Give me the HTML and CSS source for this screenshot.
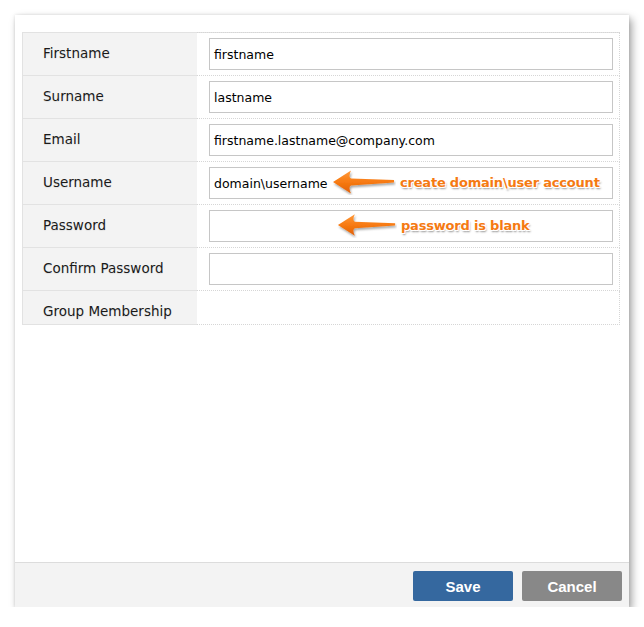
FILE: index.html
```html
<!DOCTYPE html>
<html>
<head>
<meta charset="utf-8">
<link rel="stylesheet" href="styles.css">
</head>
<body>
<svg width="0" height="0" class="defs">
  <defs>
    <linearGradient id="og" x1="0" y1="0" x2="0" y2="1">
      <stop offset="0" stop-color="#ff9a3c"/>
      <stop offset="0.5" stop-color="#f77a12"/>
      <stop offset="1" stop-color="#e0600a"/>
    </linearGradient>
    <filter id="sh" x="-20%" y="-30%" width="150%" height="180%">
      <feDropShadow dx="1" dy="2" stdDeviation="1.2" flood-color="#000" flood-opacity="0.35"/>
    </filter>
  </defs>
</svg>
<div class="dialog">
  <div class="dialog-body">
    <div class="form">
      <div class="row">
        <div class="label">Firstname</div>
        <div class="value"><div class="input">firstname</div></div>
      </div>
      <div class="row">
        <div class="label">Surname</div>
        <div class="value"><div class="input">lastname</div></div>
      </div>
      <div class="row">
        <div class="label">Email</div>
        <div class="value"><div class="input">firstname.lastname@company.com</div></div>
      </div>
      <div class="row">
        <div class="label">Username</div>
        <div class="value">
          <div class="input">domain\username</div>
          <div class="note note-user">
            <svg class="arrow" width="64" height="26" viewBox="0 0 64 26"><path d="M1 13 L19 1.5 Q16 8 19 9.5 L62 11 L62 13.5 L19 16.5 Q16 18 19 24.5 Z" fill="url(#og)" filter="url(#sh)"/></svg>
            <span class="note-text">create domain\user account</span>
          </div>
        </div>
      </div>
      <div class="row">
        <div class="label">Password</div>
        <div class="value">
          <div class="input"></div>
          <div class="note note-pass">
            <svg class="arrow" width="60" height="26" viewBox="0 0 64 26"><path d="M1 13 L19 1.5 Q16 8 19 9.5 L62 11 L62 13.5 L19 16.5 Q16 18 19 24.5 Z" fill="url(#og)" filter="url(#sh)"/></svg>
            <span class="note-text">password is blank</span>
          </div>
        </div>
      </div>
      <div class="row">
        <div class="label">Confirm Password</div>
        <div class="value"><div class="input"></div></div>
      </div>
      <div class="row last">
        <div class="label">Group Membership</div>
        <div class="value"></div>
      </div>
    </div>
  </div>
  <div class="dialog-footer">
    <button class="btn btn-save">Save</button>
    <button class="btn btn-cancel">Cancel</button>
  </div>
</div>
</body>
</html>
```
FILE: styles.css
```css
html, body {
  margin: 0;
  padding: 0;
  background: #ffffff;
}
body {
  font-family: "DejaVu Sans", Verdana, sans-serif;
  padding: 15px 0 0 15px;
}
.defs {
  position: absolute;
}
.dialog {
  width: 614px;
  height: 592px;
  background: #ffffff;
  display: flex;
  flex-direction: column;
  box-shadow: 3px 4px 8px rgba(0, 0, 0, 0.35), 0 0 3px rgba(0, 0, 0, 0.12);
}
.dialog-body {
  flex: 1;
  padding: 17px 9px 0 7px;
}
.form {
  border-top: 1px solid #e2e2e2;
}
.row {
  display: grid;
  grid-template-columns: 175px 1fr;
}
.label {
  background: #f3f3f3;
  border-left: 1px solid #e2e2e2;
  border-bottom: 1px solid #e2e2e2;
  padding: 12px 0 4px 20px;
  font-size: 13.5px;
  line-height: 17px;
  color: #1a1a1a;
  text-shadow: 0 1px 1px rgba(0,0,0,0.08);
}
.value {
  position: relative;
  border-bottom: 1px dotted #d6d6d6;
  border-right: 1px dotted #d6d6d6;
  padding: 5px 6px 5px 12px;
}
.row:first-child .value {
  border-top: 1px dotted #d6d6d6;
  margin-top: -1px;
}
.input {
  height: 30px;
  border: 1px solid #c6c6c6;
  background: #fff;
  box-sizing: content-box;
  padding: 0 0 0 4px;
  font-size: 12.5px;
  line-height: 31px;
  color: #000;
}
.last .value {
  padding: 0;
}
.note {
  position: absolute;
  top: 7px;
  display: flex;
  align-items: center;
  gap: 4px;
}
.note-user {
  left: 135px;
}
.note-pass {
  left: 140px;
}
.note-text {
  font-weight: bold;
  font-size: 13px;
  letter-spacing: -0.2px;
  color: #f57a12;
  text-shadow: -1px -1px 0 #fff, 1px -1px 0 #fff, -1px 1px 0 #fff, 1px 1px 0 #fff, 1px 2px 2px rgba(0,0,0,0.45);
}
.dialog-footer {
  border-top: 1px solid #dcdcdc;
  background: #f3f3f3;
  display: flex;
  justify-content: flex-end;
  align-items: flex-start;
  gap: 9px;
  padding: 8px 7px 0 0;
  box-sizing: border-box;
  height: 45px;
}
.btn {
  width: 100px;
  height: 30px;
  border: none;
  border-radius: 2px;
  color: #fff;
  font-family: "Liberation Sans", Arial, sans-serif;
  font-weight: bold;
  font-size: 15px;
  cursor: pointer;
}
.btn-save {
  background: #35689f;
}
.btn-cancel {
  background: #888888;
}
```
